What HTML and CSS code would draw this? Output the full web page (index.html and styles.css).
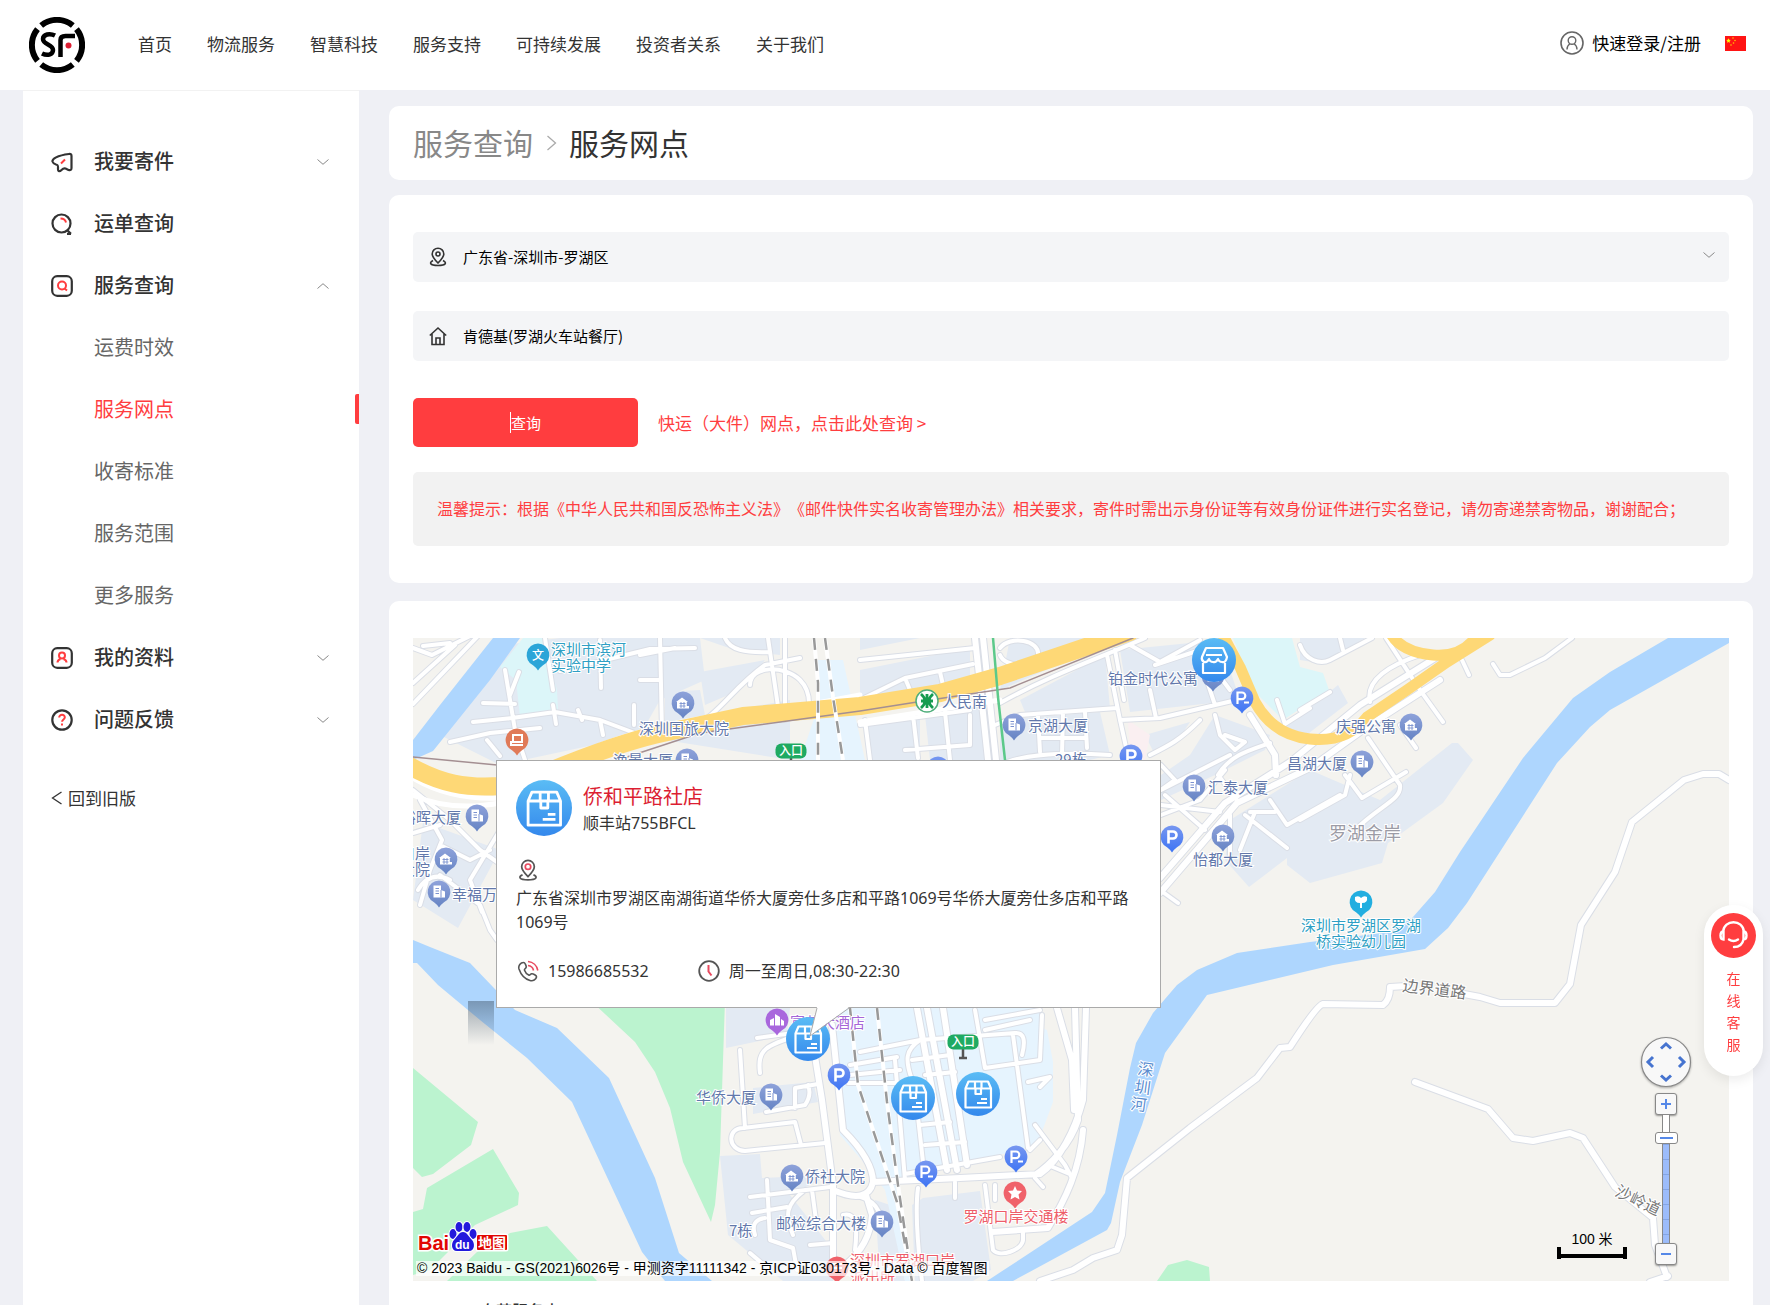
FILE: index.html
```html
<!DOCTYPE html>
<html lang="zh-CN">
<head>
<meta charset="utf-8">
<meta name="viewport" content="width=device-width, initial-scale=1">
<title>服务网点</title>
<link rel="stylesheet" href="styles.css">
</head>
<body>
<header class="topbar">
  <a class="logo" href="#" aria-label="首页">
    <svg width="56" height="56" viewBox="0 0 56 56">
      <g fill="none" stroke="#000" stroke-width="6">
        <path d="M12.200 8.500A25 25 0 0 1 43.800 8.500" />
        <path d="M47.500 12.200A25 25 0 0 1 47.500 43.800" />
        <path d="M43.800 47.500A25 25 0 0 1 12.200 47.500" />
        <path d="M8.500 43.800A25 25 0 0 1 8.500 12.200" />
      </g>
      <path d="M26 18.500C21 16 14 17 14 22c0 6 10 5 10 11 0 5-6 6-11 3.500" fill="none" stroke="#000" stroke-width="4.500"/>
      <path d="M31.500 40V23q0-4 5-4H46" fill="none" stroke="#000" stroke-width="4.500"/>
      <circle cx="39.500" cy="28.500" r="3" fill="#dc1e32"/>
    </svg>
  </a>
  <nav class="topnav">
    <a href="#">首页</a><a href="#">物流服务</a><a href="#">智慧科技</a><a href="#">服务支持</a><a href="#">可持续发展</a><a href="#">投资者关系</a><a href="#">关于我们</a>
  </nav>
  <div class="account">
    <a class="login" href="#">
      <svg width="24" height="24" viewBox="0 0 24 24" fill="none" stroke="#666"><circle cx="12" cy="12" r="11" stroke-width="1.600"/><circle cx="12" cy="9.500" r="3.800" stroke-width="1.400"/><path d="M7 18.500c0-3 1-4.500 2.800-5.500M17 18.500c0-3-1-4.500-2.800-5.500" stroke-width="1.400"/></svg>
      <span>快速登录/注册</span>
    </a>
    <button class="flag" type="button" aria-label="语言">
      <svg width="21" height="15" viewBox="0 0 21 15"><path d="M0 0h21v15H0z" fill="#ff1414"/><path d="M3.500 2.200l.7 1.600 1.700.2-1.300 1.100.4 1.700-1.500-.9-1.500.9.4-1.700L1.100 4l1.700-.2z" fill="#ff0"/><g fill="#ffc800"><circle cx="8" cy="2" r=".8"/><circle cx="10" cy="4.500" r=".8"/><circle cx="8.500" cy="7" r=".8"/><circle cx="6" cy="9" r=".8"/></g></svg>
    </button>
  </div>
</header>

<div class="layout">
  <aside class="sidebar">
    <nav>
      <a class="item" href="#">
        <svg class="ico" viewBox="0 0 22 22"><path d="M1.500 10.500C1 8 6 4.500 18 3c2-.2 2.500.5 2.500 2v12c0 2-1 2.500-3 2l-3-1.500c-2-.5-3 .5-4 1.500-1.500 1.500-3.500 2-3.500-1 0-3 .5-4-2-4.500C3 13 2 12 1.500 10.500z"/><path class="red" d="M10 12.500l4-4"/></svg>
        <span>我要寄件</span><svg class="chev" viewBox="0 0 12 6"><path d="M.5.500L6 5.300 11.500.5"/></svg></a>
      <a class="item" href="#">
        <svg class="ico" viewBox="0 0 22 22"><circle cx="10.500" cy="10.500" r="9"/><path d="M16 17l4 3.800M16 20.800h4"/><path class="red" d="M9.500 5.500c3 0 5 1.500 5.500 4"/></svg>
        <span>运单查询</span></a>
      <a class="item" href="#">
        <svg class="ico" viewBox="0 0 22 22"><rect x="1.200" y="1.200" width="19.600" height="19.600" rx="5"/><circle class="red" cx="11" cy="10.500" r="4"/><path class="red" d="M13.500 13.500l2.500 2"/></svg>
        <span>服务查询</span><svg class="chev" viewBox="0 0 12 6"><path d="M.5 5.500L6 .7l5.500 4.800"/></svg></a>
      <a class="item sub" href="#"><span>运费时效</span></a>
      <a class="item sub active" href="#"><span>服务网点</span></a>
      <a class="item sub" href="#"><span>收寄标准</span></a>
      <a class="item sub" href="#"><span>服务范围</span></a>
      <a class="item sub" href="#"><span>更多服务</span></a>
      <a class="item" href="#">
        <svg class="ico" viewBox="0 0 22 22"><rect x="1.200" y="1.200" width="19.600" height="19.600" rx="5"/><circle class="red" cx="11" cy="8.500" r="3"/><path class="red" d="M6.500 15.500c0-2 1.500-3 3-3.500M15.500 15.500c0-2-1.500-3-3-3.500"/></svg>
        <span>我的资料</span><svg class="chev" viewBox="0 0 12 6"><path d="M.5.500L6 5.300 11.500.5"/></svg></a>
      <a class="item" href="#">
        <svg class="ico" viewBox="0 0 22 22"><circle cx="11" cy="11" r="9.700"/><path class="red" d="M8.200 8.500c0-3.800 5.800-3.500 5.600 0-.1 2-2.700 2-2.700 4.300M11 14.500v2"/></svg>
        <span>问题反馈</span><svg class="chev" viewBox="0 0 12 6"><path d="M.5.500L6 5.300 11.500.5"/></svg></a>
    </nav>
    <a class="back" href="#"><svg width="12" height="14" viewBox="0 0 12 14"><path d="M10.500 1L1.500 7l9 6" fill="none" stroke="#333" stroke-width="1.300"/></svg><span>回到旧版</span></a>
  </aside>

  <main class="content">
    <nav class="card crumbs" aria-label="breadcrumb">
      <a href="#">服务查询</a>
      <svg width="11" height="16" viewBox="0 0 11 16"><path d="M1.500 1l8 7-8 7" fill="none" stroke="#aaa" stroke-width="1.300"/></svg>
      <span>服务网点</span>
    </nav>

    <form class="card search">
      <div class="field">
        <svg class="lead" viewBox="0 0 18 20"><path d="M9 16C6 13 3.200 10 3.200 7a5.800 5.800 0 0 1 11.600 0c0 3-2.800 6-5.800 9z"/><circle cx="9" cy="7" r="2"/><path d="M4 13.500c-4 2-3.500 5 5 5s9-3 5-5"/></svg>
        <select aria-label="地区"><option>广东省-深圳市-罗湖区</option></select>
        <svg class="chev" viewBox="0 0 12 6"><path d="M.5.500L6 5.300 11.500.5"/></svg>
      </div>
      <div class="field">
        <svg class="lead" viewBox="0 0 18 20"><path d="M.8 9.500L9 2l8.200 7.500M3 8v10.500h12V8M7 18v-6h4v6"/></svg>
        <input type="text" aria-label="地址" value="肯德基(罗湖火车站餐厅)">
      </div>
      <div class="actions">
        <button class="query" type="button"><span>查询</span></button>
        <a href="#">快运（大件）网点，点击此处查询 &gt;</a>
      </div>
      <p class="notice">温馨提示：根据《中华人民共和国反恐怖主义法》《邮件快件实名收寄管理办法》相关要求，寄件时需出示身份证等有效身份证件进行实名登记，请勿寄递禁寄物品，谢谢配合；</p>
    </form>

    <section class="card results">
      <div class="map">
        <svg class="tiles" viewBox="413 638 1316 643" preserveAspectRatio="xMinYMin slice">
          <defs>
            <linearGradient id="sky" x1="0" y1="0" x2="0" y2="1"><stop offset="0" stop-color="#5abcf5"/><stop offset="1" stop-color="#3488ec"/></linearGradient>
            <linearGradient id="gBld" x1="0" y1="0" x2="0" y2="1"><stop offset="0" stop-color="#8ea2da"/><stop offset="1" stop-color="#6684c4"/></linearGradient>
            <linearGradient id="gPark" x1="0" y1="0" x2="0" y2="1"><stop offset="0" stop-color="#7797f0"/><stop offset="1" stop-color="#3d74f4"/></linearGradient>
            <path id="drop" d="M0-11.500A11.500 11.500 0 0 1 5 10.300Q2 12.500 0 15.500Q-2 12.500-5 10.300A11.500 11.500 0 0 1 0-11.500z"/>
            <g id="house"><use href="#drop" fill="url(#gBld)"/><path d="M-7-1L-1-5.500 5-1H3.800V3H6v2.500H-6V-1z" fill="#fff"/><path d="M-3.500.5h6M-3.500 3h6M-2-1v6M1-1v6" stroke="#7c92cf" stroke-width=".9"/></g>
            <g id="tower"><use href="#drop" fill="url(#gBld)"/><path d="M-5.500-6.500H2V-2l4 1.500v6H-5.500z" fill="#fff"/><path d="M-3.500-3.500H0M-3.500-1H0M-3.500 1.500H0M2-2v7.500" stroke="#7c92cf"/></g>
            <g id="park"><use href="#drop" fill="url(#gPark)"/><path d="M-3.500 6.500V-5.500H1a3.400 3.400 0 0 1 0 7H-3" fill="none" stroke="#fff" stroke-width="2.600"/></g>
            <g id="parkb"><use href="#drop" fill="url(#gPark)"/><path d="M-4.500 6V-5.500H0a3.300 3.300 0 0 1 0 6.600H-4M2 4.500h5" fill="none" stroke="#fff" stroke-width="2.200"/></g>
            <g id="parcel"><circle r="22" fill="url(#sky)"/><path d="M-12.500-5.500V13.500H13V-5.500M-12.500-5.500l3-7H10l3 7zM-3-12.500v7M3.500-12.500v7M-2.500-5.500V0H3V-5.500M3 5H9M-1 9H9" fill="none" stroke="#fff" stroke-width="2.200" stroke-linejoin="round"/></g>
            <g id="gate"><path d="M0 6v9M-4 16h8" stroke="#555" stroke-width="2.500"/><rect x="-15.500" y="-7.500" width="31" height="15" rx="6" fill="#1faa62"/></g>
            <path id="minor" d="M413 648L432 655 472 635M423 646L450 643M413 683L455 645M413 704L478 636M505 670L515 730 525 760M519 672L510 695M483 703L515 704M473 722L512 718 555 712 600 720 640 735M450 742L490 733 540 728M553 705L556 724M545 638L553 690M600 640L601 688M578 710L582 720M634 705L634 725M660 638L662 732M560 671L650 649 695 648M640 680L660 680M487 740L500 756M600 720L603 735M725 638C730 650 745 653 770 652M750 685C750 665 785 665 800 680Q812 692 808 713M690 728C720 715 730 690 765 665L800 658M768 638L780 720M785 638L785 720M640 655L675 648M413 790L450 820 480 850 497 862M420 800L442 840 430 870 420 905M440 845L470 860 490 850M440 875L480 905 490 930 497 940M418 890Q430 870 450 880M413 833L440 825M500 830L470 880 482 912M860 660L975 648M860 700L905 678 973 664M905 678L910 690M940 672L943 685M860 725L970 710M913 715L918 758M945 712L950 760M970 715L970 745M905 750L970 745M865 720L870 760M1000 648C1010 635 1040 640 1038 655 1035 668 1005 668 1000 655M1000 703C1050 675 1100 658 1145 638M995 725L1020 715 1117 708M1038 715L1040 752M1063 712L1062 755M1085 712L1087 748M1040 738L1085 738M1000 765Q1030 750 1110 755M1107 655L1120 720 1130 765M1115 650L1124 700M1120 720L1160 718 1245 698M1200 660L1215 705M1130 645L1160 662 1200 640M1200 720C1180 740 1170 745 1150 755M1155 665L1200 650 1230 690M1215 715L1220 735 1235 750 1245 742 1225 735M1218 775C1230 755 1250 750 1270 743M1161 765L1175 780 1161 790 1230 755M1218 775L1237 800M1150 690L1156 718M1161 805L1220 812M1165 795L1205 830M1160 890L1178 903M1270 800L1287 825 1340 795M1245 815L1287 848M1255 812L1240 850M1230 815L1230 855M1250 812L1275 812M1161 815L1200 800 1225 770M1300 710L1330 692M1300 645C1305 660 1320 665 1330 660L1372 638M1340 638L1343 650M1277 700L1285 724 1310 708M1462 660L1469 675M1493 664L1500 675 1510 675 1545 658 1572 638M1370 702C1365 680 1390 665 1420 655M1386 638L1420 690 1443 722M1368 738L1400 785C1402 800 1380 805 1355 830M1300 820L1345 795 1350 775M1345 775L1362 798 1406 772M1400 725L1416 748M740 1050L745 1128M825 1143L745 1151C727 1150 727 1128 743 1128L795 1122 801 1145M760 1073C757 1050 765 1045 800 1035M757 1038L815 1030M766 1112L805 1105Q812 1095 808 1085M795 1108V1088L818 1084M750 1197L830 1187M767 1180L770 1240 793 1248 797 1270M752 1213L787 1207M805 1190C785 1205 785 1215 793 1235M810 1245L833 1243M750 1253L770 1270M812 1190L816 1220M755 1235Q750 1220 765 1218M860 1052L920 1040 1015 1033Q1028 1032 1022 1055M920 1040C905 1050 905 1060 912 1080M850 1065L897 1057M850 1075L900 1070M848 1083L895 1083M895 1060L905 1180M975 1010L985 1068 1040 1060 1042 1015M985 1020L1040 1010M985 1030L1030 1020M1013 1035L1028 1148M1028 1082L1050 1077 1040 1087M915 1090L925 1180M920 1125L950 1122M925 1145L965 1142M905 1174L1000 1157M912 1060L950 1055M925 1075L955 1072M955 1182L955 1198M985 1185L993 1250C1000 1258 1022 1250 1023 1240V1232M995 1185V1200M918 1188C915 1210 917 1240 922 1281M1035 1178L1043 1187M1035 1125L1065 1165 1072 1178M1048 1165L1072 1175M1030 1150L1040 1140M845 1195Q880 1195 882 1225M843 1215Q860 1210 855 1250"/>
            <path id="major" d="M1160 893L1237 803 1310 768 1370 725 1440 680M1160 878L1225 803 1290 762 1360 705 1440 655M1250 715L1275 755 1276 775M1729 780L1719 774 1703 774 1684 780 1632 822 1615 872 1581 925 1570 984 1555 1003 1500 1003 1480 997 1464 994M1406 986L1390 987Q1390 1000 1383 1005L1323 1004Q1317 1005 1290 1047L1280 1048 1257 1078 1190 1128 1127 1178 1122 1235 1117 1250 1093 1258 1073 1270 1040 1281M1415 1082L1488 1109 1513 1138 1533 1141 1570 1133 1583 1138 1615 1187 1653 1218 1655 1245 1667 1277M1650 1282L1668 1276M814 1050L822 1100 833 1185 833 1270M832 1025L843 1130Q873 1160 873 1182L960 1178 1040 1174C1060 1160 1075 1130 1083 1100L1086 1008M1075 1008L1078 1120C1070 1145 1050 1165 1035 1175M1057 1008L1072 1060 1074 1110M1083 1130C1080 1170 1065 1200 1048 1228L992 1232M917 1008L947 1170M927 1008L957 1170M943 1008L967 1165M833 1190Q868 1205 873 1182M866 1195L872 1215Q870 1245 845 1265M975 638L988 760M983 638L996 760"/>
          </defs>
          <path d="M413 638H1729V1281H413z" fill="#f4f3ef"/>
          <g fill="#e3eaf3">
            <path d="M440 735L505 645 560 638H700L705 680 660 700 640 735 500 765zM665 692L700 690 705 715 790 700 790 760 665 740zM700 672L765 660 740 690 705 705zM700 638H780V655L735 650zM860 670L970 648 970 690 860 700zM860 650L920 638H860zM865 725L920 715V760H870zM925 715L985 705V760H930zM1010 638L1120 638 1000 690zM1000 720L1100 712 1110 755 1090 760H1000zM1020 700L1105 655 1110 708 1025 712zM1120 650L1220 640 1240 700 1130 712zM1145 735L1190 722 1175 745 1155 755zM1190 755L1215 715 1270 735 1265 750 1215 775 1161 800V775z"/>
            <path d="M1300 638H1365L1325 664 1300 660zM1310 708L1338 685 1348 703 1300 740 1280 725zM1230 820L1310 770 1380 800 1452 743 1458 743 1473 760 1443 803 1388 843 1382 863 1310 883 1287 865 1287 858 1249 887 1225 860z"/>
            <path d="M423 822L500 850 458 928 413 900zM726 1008H790L787 1035 726 1048zM753 1088L813 1082 818 1102 753 1114zM720 1156L760 1154 762 1178 830 1175 790 1195 833 1250V1281H783L728 1235zM912 1205L923 1198 980 1191 991 1270 973 1281H915zM875 1200L890 1205 905 1281H880z"/>
          </g>
          <g fill="#e6f4fe"><path d="M817 660H843L865 760H800L817 710zM835 1008H1040L1042 1028 1047 1030 1053 1062V1102L1037 1145 950 1168 895 1182 913 1281H905L885 1190 860 1158 840 1135z"/></g>
          <g fill="#dcf6f9"><path d="M523 638H543L557 690 558 710 520 717 516 680 500 667zM1233 638H1292L1300 667 1323 673 1329 690 1283 720 1253 690 1243 663z"/></g>
          <path d="M1128 720L1150 735 1145 760 1130 755z" fill="#faeff1"/>
          <g fill="#bbf3cf"><path d="M413 1068L478 1122 471 1145 433 1174 422 1177 413 1168zM493 1149L519 1193 518 1205 475 1225 430 1270 413 1275V1212L423 1209 427 1188zM477 1252L510 1233 547 1226 597 1281H447zM590 1000H725L720 1152 715 1205 711 1222 683 1162 670 1108 655 1072 635 1042zM1157 1281L1168 1265 1187 1260 1209 1267 1210 1281z"/></g>
          <g fill="#aed6fe">
            <path d="M493 638H520L490 680 433 751 413 760V740L440 705zM413 940L430 947 470 963 515 1010 557 1028 609 1078 655 1178 679 1253 712 1281H665L642 1252 572 1102 527 1058 480 1020 438 985 417 963H413z"/>
            <path d="M1668 638H1729V643L1610 710 1590 727 1557 763 1467 903 1448 928 1425 949 1333 965 1207 995 1165 1053 1142 1125 1120 1182 1111 1223 1107 1230 1013 1281H987L1092 1212 1105 1193 1117 1135 1130 1068 1136 1043 1153 1013 1177 985 1197 970 1237 953 1310 942 1390 932 1413 917 1435 892 1460 852 1523 758 1573 698 1610 672z"/>
          </g>
          <g fill="none" stroke-linejoin="round" stroke-linecap="round">
            <g stroke="#dadee6"><use href="#minor" stroke-width="6"/><use href="#major" stroke-width="8"/></g>
            <g stroke="#fff"><use href="#minor" stroke-width="4"/><use href="#major" stroke-width="6"/></g>
            <g stroke="#fff" stroke-width="5"><path d="M413 795Q450 812 500 803M600 745Q680 715 780 710L860 695M860 722L1000 700M413 778Q450 800 500 798"/></g>
            <g stroke="#fed876" stroke-width="18"><path d="M400 760C440 786 470 788 500 786L540 775C600 750 640 738 663 733L743 716 860 706 940 693 1000 676 1130 632"/></g>
            <g stroke="#fed876" stroke-width="11"><path d="M1220 630L1240 667 1255 702Q1273 735 1310 739T1367 717L1407 690 1447 662 1490 635M1390 632Q1400 652 1433 655T1480 630"/></g>
            <path d="M413 757L497 765M627 757L700 733 860 711 917 702 1010 688 1133 638" stroke="#a48f92" stroke-width="1.500"/>
            <path d="M993 638L998 697 1005 760" stroke="#5cc98a" stroke-width="2.500"/>
          </g>
          <g fill="none"><path d="M814 638L818 683V760M825 638L833 697 843 760M850 1008L858 1085 897 1202 912 1281M877 1008L887 1102 898 1185 908 1252" stroke="#fff" stroke-width="4"/><path d="M814 638L818 683V760M825 638L833 697 843 760M850 1008L858 1085 897 1202 912 1281M877 1008L887 1102 898 1185 908 1252" stroke="#999" stroke-width="2.500" stroke-dasharray="12 9"/></g>

          <g>
            <g transform="translate(538 655)"><use href="#drop" fill="#2ba5d8"/><text class="glyph" y="5">文</text></g>
            <use href="#house" x="683" y="703"/><use href="#tower" x="687" y="760"/><use href="#tower" x="477" y="816"/><use href="#house" x="446" y="859"/><use href="#tower" x="439" y="892"/>
            <g transform="translate(517 740)"><use href="#drop" fill="#e07a58"/><path d="M-4-5H5V2H-4zM-6 1V5H6" fill="none" stroke="#fff" stroke-width="2"/></g>
            <use href="#gate" x="791" y="751"/><text class="glyph" x="791" y="755">入口</text>
            <circle cx="927" cy="701" r="11" fill="#fff" stroke="#4fae7b" stroke-width="1.500"/><path d="M921 694Q929 701 921 708M933 694Q925 701 933 708M921 701H933M927 694V708" fill="none" stroke="#179b50" stroke-width="2.800"/>
            <use href="#tower" x="1014" y="725"/><use href="#park" x="1131" y="756"/><use href="#park" x="938" y="768"/><use href="#tower" x="1213" y="676"/><use href="#parkb" x="1242" y="698"/><use href="#tower" x="1194" y="786"/><use href="#house" x="1223" y="836"/><use href="#park" x="1172" y="837"/><use href="#tower" x="1362" y="762"/><use href="#house" x="1411" y="725"/>
            <g transform="translate(1361 902)"><use href="#drop" fill="#22aee0"/><path d="M-6-5Q-2-7 0-4 3-7 6-5 7 1 1 1V6H-1V1Q-7 1-6-5z" fill="#fff"/></g>
            <g transform="translate(777 1020)"><use href="#drop" fill="#a967dd"/><path d="M-7 5.500V0L-3-2V5.500zM-2 5.500V-6L3-3V5.500zM4 5.500V-1L7 1V5.500z" fill="#fff"/></g>
            <use href="#park" x="839" y="1075"/><use href="#tower" x="771" y="1095"/><use href="#house" x="792" y="1176"/><use href="#tower" x="882" y="1222"/><use href="#gate" x="963" y="1042"/><text class="glyph" x="963" y="1046">入口</text>
            <use href="#parkb" x="926" y="1172"/><use href="#parkb" x="1016" y="1157"/>
            <g transform="translate(1015 1193)"><use href="#drop" fill="#f0626a"/><path d="M0-7L2-2.500 7-2 3.500 1.500 4.500 6.500 0 4-4.500 6.500-3.500 1.500-7-2-2-2.500z" fill="#fff"/></g>
            <g transform="translate(837 1268)"><use href="#drop" fill="#f0626a"/><path d="M-5-4H5M-5 0H5" stroke="#fff" stroke-width="2"/></g>
          </g>
          <g class="poi">
            <g class="cyan"><text x="551" y="655">深圳市滨河</text><text x="551" y="671">实验中学</text><text class="mid" x="1361" y="931">深圳市罗湖区罗湖</text><text class="mid" x="1361" y="947">桥实验幼儿园</text></g>
            <text class="mid" x="684" y="734">深圳国旅大院</text><text x="613" y="766">渔景大厦</text><text class="end" x="461" y="823">裕晖大厦</text><text class="end" x="430" y="859">口岸</text><text class="end" x="430" y="875">大院</text><text x="452" y="900">幸福万</text>
            <text x="942" y="707">人民南</text><text x="1028" y="731">京湖大厦</text><text x="1055" y="765">29栋</text><text x="1108" y="684">铂金时代公寓</text><text x="1208" y="793">汇泰大厦</text><text class="mid" x="1223" y="865">怡都大厦</text><text x="1287" y="769">昌湖大厦</text><text x="1336" y="732">庆强公寓</text>
            <text x="696" y="1103">华侨大厦</text><text x="805" y="1182">侨社大院</text><text x="729" y="1236">7栋</text><text x="776" y="1229">邮检综合大楼</text>
            <text class="purple" x="790" y="1028">富苑大酒店</text>
            <g class="rose"><text class="mid" x="1016" y="1222">罗湖口岸交通楼</text><text x="850" y="1266">深圳市罗湖口岸</text><text x="850" y="1283">派出所</text></g>
            <g class="place"><text x="1329" y="840">罗湖金岸</text></g>
            <g class="road"><text transform="translate(1402 991) rotate(7)">边界道路</text><text transform="translate(1614 1195) rotate(26)">沙岭道</text></g>
            <g class="river"><text transform="translate(1137 1074) rotate(8)">深</text><text transform="translate(1134 1092) rotate(8)">圳</text><text transform="translate(1130 1109) rotate(8)">河</text></g>
          </g>
          <g transform="translate(1214 660)"><circle r="22" fill="url(#sky)"/><path d="M-11 3V13H11V3M-8-12H9L13-3Q12 3 8 2 5 2 4-1 2 3-1 2-4 2-5-1-7 3-10 2-13 0-12-3zM-8-5H8" fill="none" stroke="#fff" stroke-width="2.200" stroke-linejoin="round"/></g>
          <use href="#parcel" x="808" y="1039"/><use href="#parcel" x="913" y="1098"/><use href="#parcel" x="978" y="1094"/>
        </svg>

        <div class="shade"></div>
        <article class="popup">
          <div class="store">
            <svg width="56" height="56" viewBox="-22 -22 44 44"><use href="#parcel"/></svg>
            <div><h2>侨和平路社店</h2><p>顺丰站755BFCL</p></div>
          </div>
          <svg class="pin" width="24" height="22" viewBox="-2 0 22 20" fill="none" stroke="#555" stroke-width="1.600"><path d="M9 16C6 13 3.200 10 3.200 7a5.800 5.800 0 0 1 11.600 0c0 3-2.800 6-5.800 9z"/><circle cx="9" cy="7" r="2.500" stroke="#e84a5f"/><path d="M4 14.500c-4 1.500-3.500 4.500 5 4.500s9-3 5-4.500"/></svg>
          <p class="addr">广东省深圳市罗湖区南湖街道华侨大厦旁仕多店和平路1069号华侨大厦旁仕多店和平路1069号</p>
          <div class="contact">
            <svg width="22" height="22" viewBox="0 0 22 22" fill="none" stroke="#555" stroke-width="1.600"><path d="M6.500 2.500c-3 0-5.500 3-4.500 6.500 2 6 6 10 11 11.500 3 1 6-1 6.500-3.500.3-1.500-3.500-3.500-4.800-3.300-1.500.3-1.500 2-3 1.300-2-1-3.500-2.800-4.200-4.800-.5-1.500 1.500-1.500 1.700-3C9.400 5.700 8 2.500 6.500 2.500z"/><path stroke="#e84a5f" d="M11 5.500c3 .3 5 2.500 5.500 5M11 1.500c5 .5 9 4 9.800 9"/></svg>
            <span class="phone">15986685532</span>
            <svg width="22" height="22" viewBox="0 0 22 22" fill="none" stroke="#555" stroke-width="1.800"><circle cx="11" cy="11" r="9.800"/><path stroke="#e84a5f" stroke-width="2" d="M10.500 5v6.500l3 4"/></svg>
            <span>周一至周日,08:30-22:30</span>
          </div>
          <svg class="tail" width="44" height="32" viewBox="0 0 44 32"><path d="M8 0L1 29 40 0z" fill="#fff"/><path d="M8 1L1 29 40 1" fill="none" stroke="#aaa"/></svg>
        </article>

        <svg class="baidu" width="92" height="34" viewBox="0 0 92 34">
          <g fill="#e10602" stroke="#fff" stroke-width="3" paint-order="stroke"><text x="1" y="30" font-size="20">Bai</text><rect x="60" y="15" width="30" height="15" rx="1"/></g>
          <g fill="#2319dc" stroke="#fff" stroke-width="2" paint-order="stroke"><ellipse cx="36" cy="14" rx="3.500" ry="5"/><ellipse cx="42" cy="7" rx="3.500" ry="5"/><ellipse cx="50" cy="7" rx="3.500" ry="5"/><ellipse cx="56" cy="14" rx="3.500" ry="5"/><path d="M46 12c4 0 6 5 9 8s3 11-3 11H40c-6 0-6-8-3-11s5-8 9-8z"/></g>
          <text x="38" y="29" font-size="12" fill="#fff">du</text><text x="61" y="28" font-size="14" fill="#fff">地图</text>
        </svg>
        <p class="copyright">© 2023 Baidu - GS(2021)6026号 - 甲测资字11111342 - 京ICP证030173号 - Data © 百度智图</p>
        <div class="scale"><span>100 米</span><i></i></div>
        <div class="zoomer">
          <svg width="52" height="52" viewBox="-26 -26 52 52"><circle r="24.500" fill="#f8f8f8" stroke="#888" stroke-width="1.200"/><path d="M-5-13.500L0-18 5-13.500M-5 13.500L0 18 5 13.500M-13-5L-18 0-13 5M13-5L18 0 13 5" fill="none" stroke="#4674d0" stroke-width="3"/></svg>
          <button type="button" aria-label="放大"><svg width="12" height="12" viewBox="0 0 12 12"><path d="M1 6h10M6 1v10" stroke="#5588e8" stroke-width="2"/></svg></button>
          <input type="range" aria-label="缩放" min="0" max="100" value="85">
          <button type="button" aria-label="缩小"><svg width="12" height="12" viewBox="0 0 12 12"><path d="M1 6h10" stroke="#5588e8" stroke-width="2"/></svg></button>
        </div>
      </div>
      <p class="legend">自营服务点</p>
    </section>
  </main>
</div>

<button class="chat" type="button">
  <svg width="45" height="45" viewBox="0 0 45 45"><circle cx="22.500" cy="22.500" r="22.500" fill="#ff3d3f"/><g fill="none" stroke="#fff" stroke-width="2.400" stroke-linecap="round"><path d="M12 19C13 6 32 6 33 19M12.500 18.500v8Q9.500 26.500 9.500 22.500T12.500 18.500zM32.500 18.500v8Q35.500 26.500 35.500 22.500T32.500 18.500zM32.500 26.500Q31 34 23 34M18 26.500q4.500 3 9 0"/></g></svg>
  <span>在线客服</span>
</button>
</body>
</html>
```
FILE: styles.css
```css
* { box-sizing: border-box; }
body {
  margin: 0;
  height: 100vh;
  display: flex;
  flex-direction: column;
  background: #eff0f5;
  color: #333;
  font-family: "Noto Sans CJK SC", "Noto Sans", sans-serif;
  font-size: 16px;
  text-spacing-trim: space-all;
}
a { color: inherit; text-decoration: none; }
p, h2 { margin: 0; font-weight: 400; }
button, input, select { font-family: inherit; border: 0; padding: 0; margin: 0; }
svg { display: block; flex: none; }

.topbar {
  flex: none;
  height: 90px;
  padding: 0 24px 0 29px;
  display: flex;
  align-items: center;
  background: #fff;
}
.topnav { display: flex; gap: 35px; margin-left: 53px; padding-bottom: 2px; font-size: 17px; line-height: 26px; }
.account { display: flex; align-items: center; gap: 24px; margin-left: auto; padding-bottom: 4px; }
.login { display: flex; align-items: center; gap: 8px; color: #000; font-size: 17px; line-height: 26px; }
.flag { background: none; }

.layout {
  flex: 1;
  min-height: 0;
  display: grid;
  grid-template-columns: 336px minmax(0, 1fr);
  column-gap: 30px;
  padding: 0 17px 0 23px;
  overflow-y: auto;
  scrollbar-width: none;
}

.sidebar { background: #fff; border-top: 1px solid #f2f2f2; padding-top: 40px; }
.item {
  height: 62px;
  display: flex;
  align-items: center;
  padding: 0 30px 0 28px;
  font-size: 20px;
  font-weight: 500;
}
.item span { padding-bottom: 3px; }
.item .chev { margin-left: auto; }
.ico { width: 22px; height: 22px; margin-right: 21px; fill: none; stroke: #333; stroke-width: 2.2; stroke-linejoin: round; }
.ico .red { stroke: #ff3d3f; stroke-width: 2; }
.chev { width: 12px; height: 6px; fill: none; stroke: #888; }
.sub { position: relative; padding-left: 71px; font-weight: 400; color: #666; }
.active { color: #ff3d3f; }
.active::after {
  content: "";
  position: absolute;
  right: 0;
  top: 15px;
  width: 4px;
  height: 30px;
  border-radius: 2px 0 0 2px;
  background: #ff3d3f;
}
.back { display: flex; align-items: center; gap: 5px; margin-top: 35px; padding-left: 28px; font-size: 17px; line-height: 24px; }

.content { padding-top: 16px; }
.card { background: #fff; border-radius: 10px; padding: 0 24px; }
.crumbs { display: flex; align-items: center; height: 74px; padding-bottom: 3px; font-size: 30px; }
.crumbs a { color: #888; }
.crumbs svg { margin: 3px 12px 0 13px; }

.search { margin-top: 15px; padding-top: 37px; padding-bottom: 37px; }
.field {
  position: relative;
  height: 50px;
  margin-bottom: 29px;
  display: flex;
  align-items: center;
  padding: 0 14px 0 16px;
  border-radius: 5px;
  background: #f4f5f7;
}
.field .chev { margin-bottom: 4px; }
.lead { width: 18px; height: 20px; margin-right: 16px; fill: none; stroke: #333; stroke-width: 1.6; }
.field select, .field input {
  flex: 1;
  min-width: 0;
  height: 50px;
  padding-bottom: 2px;
  appearance: none;
  background: none;
  color: #000;
  font-size: 15px;
}
.actions { display: flex; align-items: center; gap: 20px; margin-top: 37px; color: #ff3d3f; font-size: 17px; }
.query { width: 225px; height: 49px; border-radius: 5px; background: #ff3d3f; color: #fff; font-size: 15px; }
.query span { border-left: 1px solid #fff; }
.notice {
  margin-top: 25px;
  padding: 24px 24px 26px;
  border-radius: 5px;
  background: #f2f2f2;
  color: #ff3d3f;
  font-size: 16px;
  line-height: 24px;
}

.results { margin-top: 18px; padding-top: 37px; padding-bottom: 37px; }
.map { position: relative; height: 643px; overflow: hidden; background: #f4f3ef; }
.tiles { width: 100%; height: 100%; }
.glyph { fill: #fff; font-size: 12px; font-weight: 500; text-anchor: middle; }
.poi text { fill: #6278ab; font-size: 15px; stroke: #fff; stroke-width: 2px; paint-order: stroke; }
.poi .mid { text-anchor: middle; }
.poi .end { text-anchor: end; }
.poi .cyan text { fill: #2f9fc4; }
.poi .purple { fill: #a667d8; }
.poi .rose text { fill: #ee5d69; }
.poi .place text { fill: #9c9ca6; font-size: 18px; }
.poi .road text { fill: #777; font-size: 16px; }
.poi .river text { fill: #5c8ed0; font-size: 16px; }

.shade { position: absolute; left: 55px; top: 363px; width: 26px; height: 44px; background: linear-gradient(rgb(70 90 110 / 50%), rgb(70 90 110 / 0%)); }
.popup {
  position: absolute;
  left: 83px;
  top: 122px;
  width: 665px;
  padding: 19px 17px 24px 19px;
  border: 1px solid #aaa;
  background: #fff;
  font-family: "Noto Sans", "Noto Sans CJK SC", sans-serif;
  line-height: 24px;
}
.store { display: flex; align-items: center; gap: 11px; }
.store h2 { padding-top: 2px; color: #dc1e32; font-size: 20px; line-height: 28px; }
.pin { margin-top: 23px; }
.addr { margin-top: 5px; }
.contact { display: flex; align-items: center; gap: 9px; margin-top: 25px; padding-left: 1px; }
.phone { margin-right: 40px; }
.tail { position: absolute; left: 312px; top: 246px; }
.baidu { position: absolute; left: 4px; bottom: 27px; font-family: "Liberation Sans", "Noto Sans CJK SC", sans-serif; font-weight: 700; }
.copyright {
  position: absolute;
  left: 3px;
  bottom: 5px;
  padding: 0 1px;
  background: rgb(255 255 255 / 70%);
  color: #000;
  font: 14px/15px "Liberation Sans", "Noto Sans CJK SC", sans-serif;
  white-space: nowrap;
}
.scale { position: absolute; right: 102px; bottom: 22px; width: 70px; color: #000; font: 14px/16px "Liberation Sans", "Noto Sans CJK SC", sans-serif; text-align: center; }
.scale i { display: block; height: 12px; margin-top: 0; border: solid #000; border-width: 0 4px; background: linear-gradient(#000, #000) 0 7px / 100% 4px no-repeat; }
.zoomer { position: absolute; right: 37px; bottom: 16px; display: flex; flex-direction: column; align-items: center; }
.zoomer svg { filter: drop-shadow(0 1px 1px rgb(0 0 0 / 30%)); }
.zoomer button {
  display: grid;
  place-items: center;
  width: 22px;
  height: 22px;
  border: 1px solid #888;
  border-radius: 3px;
  background: #f8f8f8;
  box-shadow: 0 1px 2px rgb(0 0 0 / 40%);
}
.zoomer button svg { filter: none; }
.zoomer > svg { margin-bottom: 5px; }
.zoomer input {
  appearance: none;
  writing-mode: vertical-lr;
  direction: rtl;
  width: 23px;
  height: 128px;
  background:
    linear-gradient(#fff 20px, rgb(255 255 255 / 0%) 20px) center / 6px 100% no-repeat,
    repeating-linear-gradient(#9cbcfb 0 14px, #84a5e4 14px 15px) center / 6px 100% no-repeat,
    linear-gradient(#888, #888) center / 8px 100% no-repeat;
}
.zoomer input::-webkit-slider-thumb {
  appearance: none;
  width: 23px;
  height: 12px;
  border: 1px solid #888;
  border-radius: 3px;
  background: linear-gradient(#5588e8, #5588e8) center / 13px 2px no-repeat, #fff;
}
.legend { padding: 17px 0 0 67px; font-weight: 500; line-height: 24px; }

.chat {
  position: fixed;
  right: 7px;
  top: 905px;
  width: 59px;
  height: 171px;
  padding-top: 8px;
  display: flex;
  flex-direction: column;
  align-items: center;
  gap: 9px;
  justify-content: flex-start;
  border-radius: 30px;
  background: #fff;
  box-shadow: 0 4px 12px rgb(0 0 0 / 8%);
  color: #ff3d3f;
  font-size: 14px;
  line-height: 22px;
}
.chat span { width: 14px; white-space: normal; }
```
